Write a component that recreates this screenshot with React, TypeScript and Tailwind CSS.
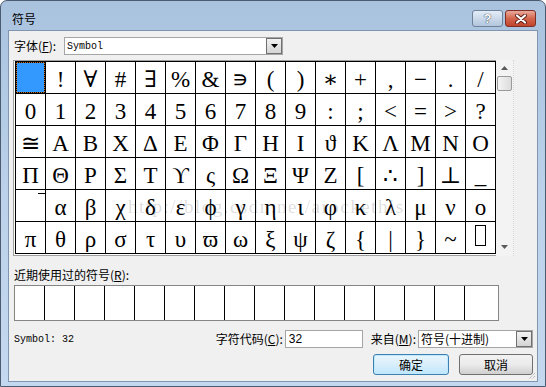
import React from 'react';

const cjk = "font-['Noto_Sans_CJK_SC','Liberation_Sans',sans-serif]";

const rows: string[][] = [
  [' ', '!', '∀', '#', '∃', '%', '&', '∍', '(', ')', '∗', '+', ',', '−', '.', '/'],
  ['0', '1', '2', '3', '4', '5', '6', '7', '8', '9', ':', ';', '<', '=', '>', '?'],
  ['≅', 'Α', 'Β', 'Χ', 'Δ', 'Ε', 'Φ', 'Γ', 'Η', 'Ι', 'ϑ', 'Κ', 'Λ', 'Μ', 'Ν', 'Ο'],
  ['Π', 'Θ', 'Ρ', 'Σ', 'Τ', 'ϒ', 'ς', 'Ω', 'Ξ', 'Ψ', 'Ζ', '[', '∴', ']', '⊥', '_'],
  ['ext', 'α', 'β', 'χ', 'δ', 'ε', 'ϕ', 'γ', 'η', 'ι', 'φ', 'κ', 'λ', 'μ', 'ν', 'ο'],
  ['π', 'θ', 'ρ', 'σ', 'τ', 'υ', 'ϖ', 'ω', 'ξ', 'ψ', 'ζ', '{', '|', '}', '~', 'box'],
];

function DropButton() {
  return (
    <div className="w-[16px] h-full border border-[#707070] bg-gradient-to-b from-[#f2f2f2] to-[#d4d4d4] flex items-center justify-center">
      <svg width="7" height="4" viewBox="0 0 7 4">
        <path d="M0 0h7L3.5 4z" fill="#000" />
      </svg>
    </div>
  );
}

function Arrow({ up }: { up?: boolean }) {
  return (
    <svg width="7" height="4" viewBox="0 0 7 4">
      <path d={up ? 'M0 4h7L3.5 0z' : 'M0 0h7L3.5 4z'} fill="#5a5a5a" />
    </svg>
  );
}

function Glyph({ ch, r, c }: { ch: string; r: number; c: number }) {
  if (r === 0 && c === 0) {
    return (
      <div className="h-[32px] border-r border-b border-black bg-[#c0701c]">
        <div className="w-full h-full border border-dotted border-black bg-[#3399ff] bg-clip-padding" />
      </div>
    );
  }
  if (ch === 'ext') {
    return (
      <div className="h-[32px] border-r border-b border-black flex justify-end items-start">
        <div className="mt-[3px] w-[7px] h-px bg-black" />
      </div>
    );
  }
  if (ch === 'box') {
    return (
      <div className="h-[32px] border-r border-b border-black flex justify-center items-start">
        <div className="mt-[3px] w-[11px] h-[21px] border border-black" />
      </div>
    );
  }
  return (
    <div className="h-[32px] border-r border-b border-black flex items-center justify-center pt-[3px] text-[23px] leading-none text-black font-['Liberation_Serif','DejaVu_Serif',serif]">
      {ch}
    </div>
  );
}

export default function App() {
  return (
    <div className="w-[546px] h-[387px] flex flex-col border border-[#4b5b70] rounded-t-[7px] bg-gradient-to-b from-[#a9c2de] via-[#bcd2ea] to-[#c4d9ef] overflow-hidden">
      {/* title bar */}
      <div className="h-[29px] flex items-start justify-between pl-[11px] pr-[9px] pt-[9px]">
        <div className={`h-[17px] flex items-center text-[12px] text-black ${cjk}`}>符号</div>
        <div className="flex gap-[2px]">
          <div className="w-[31px] h-[17px] rounded-[3px] border border-[#6f8199] bg-gradient-to-b from-[#e4edf7] to-[#b1c5dc] flex items-center justify-center text-[13px] font-bold leading-none text-white font-['Liberation_Sans',sans-serif] [text-shadow:0_0_1px_#2a3a50,0_0_1px_#2a3a50]">
            ?
          </div>
          <div className="w-[31px] h-[17px] rounded-[3px] border border-[#7d2f25] bg-gradient-to-b from-[#e9a99a] via-[#d4654d] to-[#c2442c] flex items-center justify-center">
            <svg width="14" height="10" viewBox="0 0 14 10">
              <path d="M3 1.5l8 7M11 1.5l-8 7" stroke="#5a1d14" strokeWidth="4" strokeLinecap="round" />
              <path d="M3 1.5l8 7M11 1.5l-8 7" stroke="#fff" strokeWidth="2.2" strokeLinecap="round" />
            </svg>
          </div>
        </div>
      </div>

      {/* client area */}
      <div className="relative flex-1 mx-[7px] mb-[4px] border border-[#8096b0] bg-[#f0f0f0] flex flex-col pl-[4px] pr-[4px]">
        {/* font row */}
        <div className="mt-[6px] h-[18px] flex items-center">
          <div className={`w-[51px] pl-[1px] text-[12px] text-black ${cjk}`}>
            字体(<span className="underline">F</span>):
          </div>
          <div className="w-[219px] h-[18px] flex border border-[#a5a5a5] bg-white">
            <div className="flex-1 flex items-center pl-[2px] text-[10px] text-black font-['Liberation_Mono',monospace]">Symbol</div>
            <DropButton />
          </div>
        </div>

        {/* symbol grid */}
        <div className="relative mt-[5px] flex">
          <div className="border-l border-t border-b border-[#a0a0a0] pl-[1px] pb-[1px] bg-white">
            <div className="grid grid-cols-[repeat(16,30px)] border-l border-t border-black">
              {rows.map((row, r) =>
                row.map((ch, c) => <Glyph key={`${r}-${c}`} ch={ch} r={r} c={c} />)
              )}
            </div>
          </div>
          <div className="w-[18px] flex flex-col items-center bg-[#f3f3f3] border-r border-dotted border-[#d8d8d8]">
            <div className="h-[16px] w-full flex items-center justify-center">
              <Arrow up />
            </div>
            <div className="w-[15px] h-[15px] rounded-[2px] border border-[#9a9a9a] bg-gradient-to-r from-[#f4f4f4] to-[#dcdcdc]" />
            <div className="flex-1" />
            <div className="h-[16px] w-full flex items-center justify-center mb-[1px]">
              <Arrow />
            </div>
          </div>
          <div className="absolute left-[115px] top-[137px] text-[19px] tracking-[1.5px] leading-none text-black/15 font-['Liberation_Serif',serif] pointer-events-none">
            http://blog.csdn.net/arockethis
          </div>
        </div>

        {/* recent */}
        <div className={`mt-[11px] h-[16px] flex items-center pl-[1px] text-[12px] text-black ${cjk}`}>
          近期使用过的符号(<span className="underline">R</span>):
        </div>
        <div className="mt-[2px] ml-[1px] w-[485px] h-[36px] flex border border-[#858585] bg-white">
          {Array.from({ length: 15 }).map((_, i) => (
            <div key={i} className="w-[30px] h-full border-r border-black" />
          ))}
          <div className="flex-1" />
        </div>

        {/* code row */}
        <div className="mt-[9px] h-[18px] flex items-center">
          <div className="pl-[1px] text-[10px] text-black font-['Liberation_Mono',monospace]">Symbol: 32</div>
          <div className={`ml-auto text-[12px] text-black ${cjk}`}>
            字符代码(<span className="underline">C</span>):
          </div>
          <div className="ml-[2px] w-[78px] h-[18px] border border-[#a5a5a5] bg-white flex items-center pl-[3px] text-[12px] text-black font-['Liberation_Sans',sans-serif]">
            32
          </div>
          <div className={`ml-[8px] text-[12px] text-black ${cjk}`}>
            来自(<span className="underline">M</span>):
          </div>
          <div className="ml-[2px] w-[115px] h-[18px] flex border border-[#a5a5a5] bg-white">
            <div className={`flex-1 flex items-center pl-[2px] text-[12px] text-black ${cjk}`}>符号(十进制)</div>
            <DropButton />
          </div>
        </div>

        {/* buttons */}
        <div className="mt-[6px] flex justify-end gap-[10px]">
          <div className={`w-[76px] h-[21px] rounded-[3px] border border-[#3c7fb1] bg-gradient-to-b from-[#eaf6fd] via-[#d9eefb] to-[#bee6fd] shadow-[inset_0_0_0_1px_#bfe9fc] flex items-center justify-center text-[12px] text-black ${cjk}`}>
            确定
          </div>
          <div className={`w-[74px] h-[21px] rounded-[3px] border border-[#707070] bg-gradient-to-b from-[#f2f2f2] via-[#ebebeb] to-[#cfcfcf] flex items-center justify-center text-[12px] text-black ${cjk}`}>
            取消
          </div>
        </div>

        {/* size grip */}
        <svg className="absolute right-[1px] bottom-[1px]" width="9" height="9" viewBox="0 0 9 9">
          <path d="M8 2L2 8M8 5L5 8M8 8L8 8" stroke="#a0a0a0" strokeWidth="1" strokeDasharray="1 1" />
        </svg>
      </div>
    </div>
  );
}
